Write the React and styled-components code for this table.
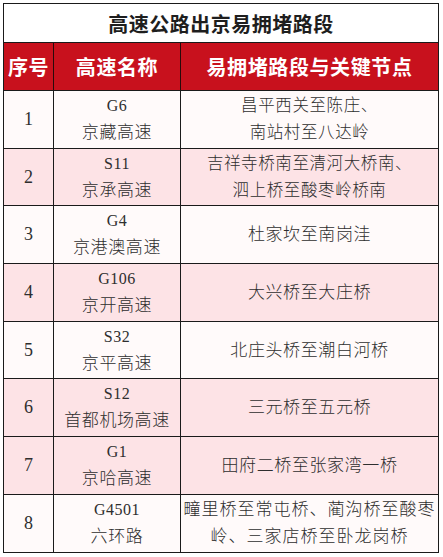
import React from 'react';
import styled, { createGlobalStyle } from 'styled-components';

const GlobalStyle = createGlobalStyle`
  html, body {
    margin: 0;
    padding: 0;
    background: #ffffff;
  }
  body {
    padding: 3px 0 0 3px;
  }
`;

const rows = [
  { no: '1', code: 'G6', name: '京藏高速', lines: ['昌平西关至陈庄、', '南站村至八达岭'] },
  { no: '2', code: 'S11', name: '京承高速', lines: ['吉祥寺桥南至清河大桥南、', '泗上桥至酸枣岭桥南'], pink: true },
  { no: '3', code: 'G4', name: '京港澳高速', lines: ['杜家坎至南岗洼'] },
  { no: '4', code: 'G106', name: '京开高速', lines: ['大兴桥至大庄桥'], pink: true },
  { no: '5', code: 'S32', name: '京平高速', lines: ['北庄头桥至潮白河桥'] },
  { no: '6', code: 'S12', name: '首都机场高速', lines: ['三元桥至五元桥'], pink: true },
  { no: '7', code: 'G1', name: '京哈高速', lines: ['田府二桥至张家湾一桥'], pink: true },
  { no: '8', code: 'G4501', name: '六环路', lines: ['疃里桥至常屯桥、蔺沟桥至酸枣', '岭、三家店桥至卧龙岗桥'], tight: true },
];

const Table = styled.table`
  width: 435px;
  border-collapse: collapse;
  table-layout: fixed;
  border: 1.5px solid #1a1a1a;
`;

const TitleCell = styled.th`
  height: 38px;
  padding: 0;
  background: #ffffff;
  font-family: "Noto Sans CJK SC", sans-serif;
  font-weight: 700;
  font-size: 20px;
  letter-spacing: 0.5px;
  color: #1e1e1e;
  text-align: center;
  border-bottom: 1px solid #1a1a1a;
`;

const HeadCell = styled.th`
  height: 47px;
  padding: 0;
  background: #c8111d;
  color: #ffffff;
  font-family: "Noto Sans CJK SC", sans-serif;
  font-weight: 700;
  font-size: 20px;
  letter-spacing: 0.6px;
  text-align: center;
  border-left: 1px solid #2a0a0a;
  border-bottom: 1.5px solid #1a1a1a;
  &:first-child {
    border-left: none;
  }
`;

const BodyRow = styled.tr`
  height: 57.7px;
  background: ${p => (p.$pink ? '#fde3e6' : '#fffafa')};
`;

const Cell = styled.td`
  padding: 0;
  text-align: center;
  vertical-align: middle;
  color: #2e2e2e;
  font-family: "Liberation Serif", "Noto Sans CJK SC", serif;
  font-weight: 300;
  border: 1.5px solid #1a1a1a;
`;

const NumCell = styled(Cell)`
  font-size: 18px;
`;

const Line = styled.div`
  font-size: ${p => (p.$small ? '16.5px' : '17px')};
  line-height: 27px;
  letter-spacing: ${p => (p.$tight ? '1px' : '0.6px')};
  white-space: nowrap;
`;

const RoadCode = styled.div`
  font-size: 16px;
  line-height: 26px;
  letter-spacing: 0.5px;
`;

export default function App() {
  return (
    <>
      <GlobalStyle />
      <Table>
        <colgroup>
          <col style={{ width: 50 }} />
          <col style={{ width: 127 }} />
          <col style={{ width: 258 }} />
        </colgroup>
        <thead>
          <tr>
            <TitleCell colSpan={3}>高速公路出京易拥堵路段</TitleCell>
          </tr>
          <tr>
            <HeadCell>序号</HeadCell>
            <HeadCell>高速名称</HeadCell>
            <HeadCell>易拥堵路段与关键节点</HeadCell>
          </tr>
        </thead>
        <tbody>
          {rows.map(r => (
            <BodyRow key={r.no} $pink={r.pink}>
              <NumCell>{r.no}</NumCell>
              <Cell>
                <RoadCode>{r.code}</RoadCode>
                <Line>{r.name}</Line>
              </Cell>
              <Cell>
                {r.lines.map(l => (
                  <Line key={l} $tight={r.tight} $small={r.lines.length > 1 && !r.tight}>{l}</Line>
                ))}
              </Cell>
            </BodyRow>
          ))}
        </tbody>
      </Table>
    </>
  );
}
